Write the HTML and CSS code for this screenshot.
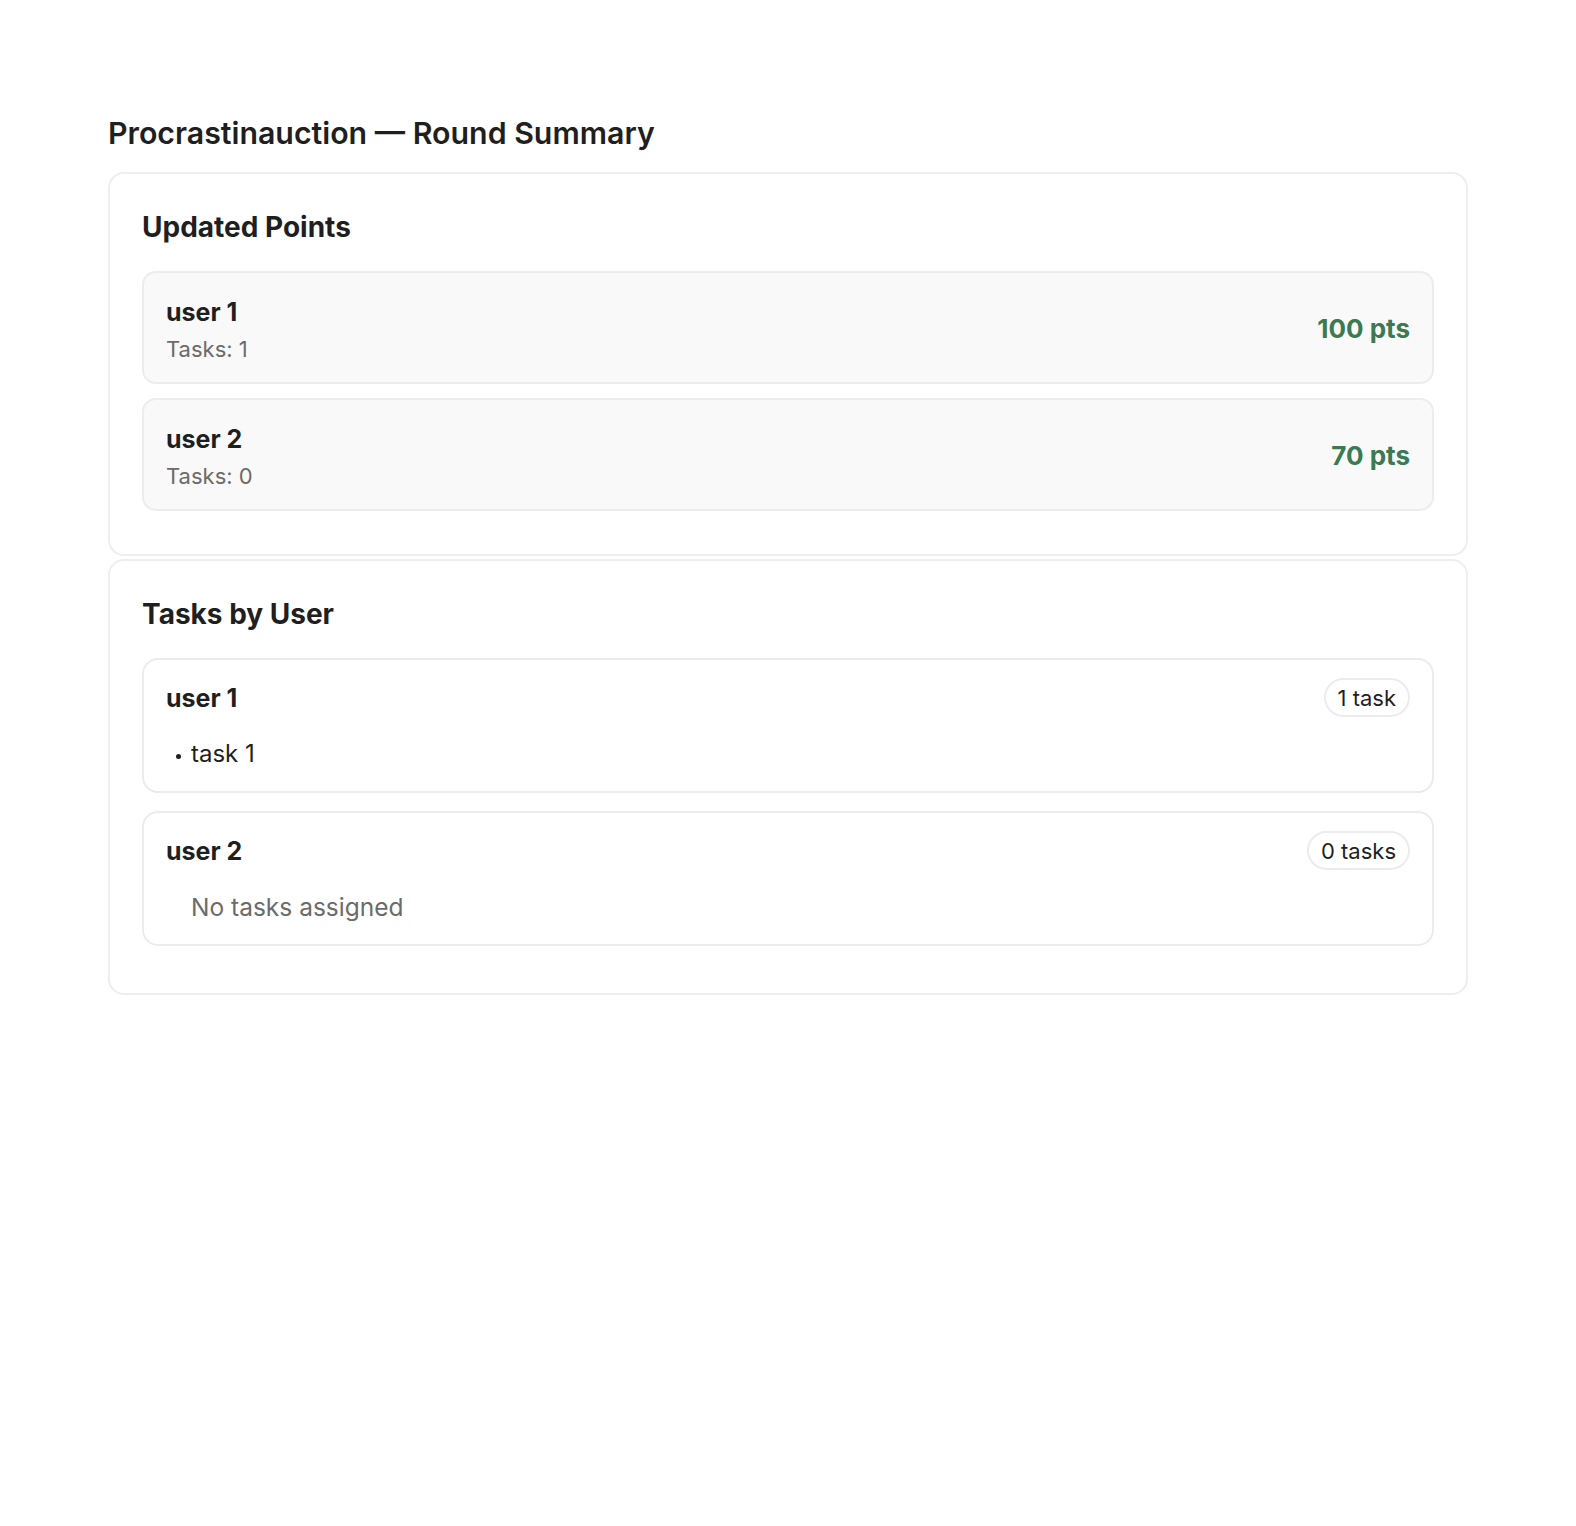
FILE: index.html
```html
<!DOCTYPE html>
<html lang="en">
<head>
<meta charset="utf-8">
<title>Procrastinauction — Round Summary</title>
<link rel="stylesheet" href="styles.css">
</head>
<body>
<main class="page">
  <h1 class="title">Procrastinauction — Round Summary</h1>

  <section class="card">
    <h2 class="card-title">Updated Points</h2>
    <div class="points-list">
      <div class="points-item">
        <div class="points-info">
          <div class="user-name">user 1</div>
          <div class="user-sub">Tasks: 1</div>
        </div>
        <div class="points-value">100 pts</div>
      </div>
      <div class="points-item">
        <div class="points-info">
          <div class="user-name">user 2</div>
          <div class="user-sub">Tasks: 0</div>
        </div>
        <div class="points-value">70 pts</div>
      </div>
    </div>
  </section>

  <section class="card">
    <h2 class="card-title">Tasks by User</h2>
    <div class="tasks-list">
      <div class="task-card">
        <div class="task-head">
          <div class="user-name">user 1</div>
          <span class="badge">1 task</span>
        </div>
        <ul class="task-items">
          <li>task 1</li>
        </ul>
      </div>
      <div class="task-card">
        <div class="task-head">
          <div class="user-name">user 2</div>
          <span class="badge">0 tasks</span>
        </div>
        <p class="no-tasks">No tasks assigned</p>
      </div>
    </div>
  </section>
</main>
</body>
</html>
```

FILE: styles.css
```css
* { box-sizing: border-box; }

html, body {
  margin: 0;
  padding: 0;
  background: #ffffff;
}

body {
  font-family: Inter, "Noto Sans", "Liberation Sans", sans-serif;
  color: #1f1f1f;
}

.page {
  width: 1360px;
  margin: 0 auto;
  padding-top: 115px;
}

.title {
  margin: 0 0 21px 0;
  font-size: 30.3px;
  font-weight: 600;
  line-height: 36px;
  color: #1f1f1f;
}

.card {
  border: 2px solid #eeeeee;
  border-radius: 16px;
  padding: 32px 32px 29px 32px;
  background: #ffffff;
  margin-bottom: 3px;
}

.card-title {
  margin: 0 0 23px 0;
  font-size: 28px;
  font-weight: 700;
  line-height: 42px;
}

.points-list {
  display: flex;
  flex-direction: column;
}

.points-item {
  display: flex;
  align-items: center;
  justify-content: space-between;
  background: #f9f9f9;
  border: 2px solid #ececec;
  border-radius: 14px;
  padding: 6px 22px 0 22px;
  height: 113px;
  margin-bottom: 14px;
}

.points-info {
  display: flex;
  flex-direction: column;
  gap: 5px;
}

.user-name {
  font-size: 25px;
  font-weight: 700;
  line-height: 32px;
  color: #1f1f1f;
}

.user-sub {
  font-size: 22px;
  line-height: 32px;
  color: #6b6b6b;
}

.points-value {
  font-size: 26px;
  font-weight: 700;
  color: #3b7a52;
  margin-bottom: 4px;
}

.tasks-list {
  display: flex;
  flex-direction: column;
}

.task-card {
  border: 2px solid #ececec;
  border-radius: 16px;
  padding: 18px 22px 0 22px;
  height: 135px;
  margin-bottom: 18px;
  background: #ffffff;
}

.task-head {
  display: flex;
  align-items: center;
  justify-content: space-between;
  height: 39px;
}

.badge {
  display: inline-flex;
  align-items: center;
  height: 39px;
  padding: 0 12px;
  border: 2px solid #ececec;
  border-radius: 999px;
  font-size: 22px;
  color: #1f1f1f;
}

.task-items {
  list-style: none;
  margin: 21px 0 0 0;
  padding: 0 0 0 10px;
}

.task-items li {
  font-size: 24px;
  line-height: 32px;
  display: flex;
  align-items: center;
  gap: 10px;
}

.task-items li::before {
  content: "";
  width: 5px;
  height: 5px;
  border-radius: 50%;
  background: #1f1f1f;
  margin-top: 4px;
}

.no-tasks {
  margin: 20px 0 0 0;
  padding-left: 25px;
  font-size: 24.5px;
  line-height: 34px;
  color: #6b6b6b;
}
```
